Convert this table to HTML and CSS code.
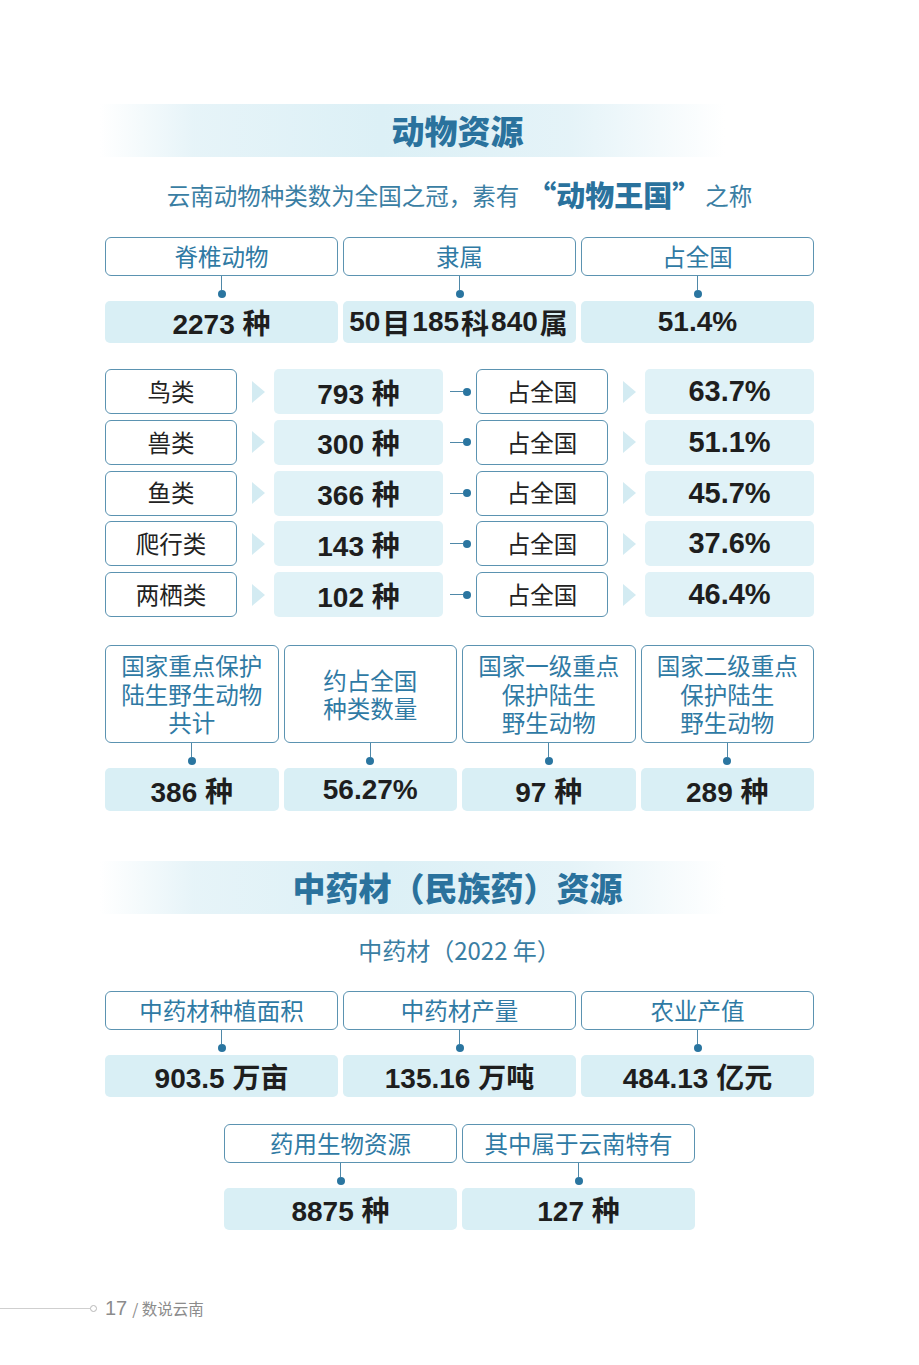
FILE: index.html
```html
<!DOCTYPE html>
<html lang="zh-CN">
<head>
<meta charset="utf-8">
<title>数说云南</title>
<link rel="stylesheet" href="styles.css">
</head>
<body>
<div class="page">
  <section class="sec sec-animal">
    <div class="band"><h2 class="band-title">动物资源</h2></div>
    <p class="sub"><span>云南动物种类数为全国之冠，素有</span><b class="sub-strong">“动物王国”</b><span>之称</span></p>

    <div class="grid3">
      <div class="stat">
        <div class="label">脊椎动物</div>
        <div class="conn"><span class="conn-line"></span><span class="conn-dot"></span></div>
        <div class="value">2273 种</div>
      </div>
      <div class="stat">
        <div class="label">隶属</div>
        <div class="conn"><span class="conn-line"></span><span class="conn-dot"></span></div>
        <div class="value">50<span class="cu">目</span>185<span class="cu">科</span>840<span class="cu">属</span></div>
      </div>
      <div class="stat">
        <div class="label">占全国</div>
        <div class="conn"><span class="conn-line"></span><span class="conn-dot"></span></div>
        <div class="value">51.4%</div>
      </div>
    </div>

    <div class="rows">
      <div class="rlabel">鸟类</div><div class="tri"></div><div class="rvalue">793 种</div><div class="hconn"><span class="hline"></span><span class="conn-dot"></span></div><div class="rlabel">占全国</div><div class="tri"></div><div class="rvalue pct">63.7%</div>
      <div class="rlabel">兽类</div><div class="tri"></div><div class="rvalue">300 种</div><div class="hconn"><span class="hline"></span><span class="conn-dot"></span></div><div class="rlabel">占全国</div><div class="tri"></div><div class="rvalue pct">51.1%</div>
      <div class="rlabel">鱼类</div><div class="tri"></div><div class="rvalue">366 种</div><div class="hconn"><span class="hline"></span><span class="conn-dot"></span></div><div class="rlabel">占全国</div><div class="tri"></div><div class="rvalue pct">45.7%</div>
      <div class="rlabel">爬行类</div><div class="tri"></div><div class="rvalue">143 种</div><div class="hconn"><span class="hline"></span><span class="conn-dot"></span></div><div class="rlabel">占全国</div><div class="tri"></div><div class="rvalue pct">37.6%</div>
      <div class="rlabel">两栖类</div><div class="tri"></div><div class="rvalue">102 种</div><div class="hconn"><span class="hline"></span><span class="conn-dot"></span></div><div class="rlabel">占全国</div><div class="tri"></div><div class="rvalue pct">46.4%</div>
    </div>

    <div class="grid4">
      <div class="stat">
        <div class="label label-tall"><span class="ln">国家重点保护</span><span class="ln">陆生野生动物</span><span class="ln">共计</span></div>
        <div class="conn"><span class="conn-line"></span><span class="conn-dot"></span></div>
        <div class="value value-b">386 种</div>
      </div>
      <div class="stat">
        <div class="label label-tall"><span class="ln">约占全国</span><span class="ln">种类数量</span></div>
        <div class="conn"><span class="conn-line"></span><span class="conn-dot"></span></div>
        <div class="value value-b">56.27%</div>
      </div>
      <div class="stat">
        <div class="label label-tall"><span class="ln">国家一级重点</span><span class="ln">保护陆生</span><span class="ln">野生动物</span></div>
        <div class="conn"><span class="conn-line"></span><span class="conn-dot"></span></div>
        <div class="value value-b">97 种</div>
      </div>
      <div class="stat">
        <div class="label label-tall"><span class="ln">国家二级重点</span><span class="ln">保护陆生</span><span class="ln">野生动物</span></div>
        <div class="conn"><span class="conn-line"></span><span class="conn-dot"></span></div>
        <div class="value value-b">289 种</div>
      </div>
    </div>
  </section>

  <section class="sec sec-herb">
    <div class="band"><h2 class="band-title">中药材（民族药）资源</h2></div>
    <p class="sub sub2">中药材（2022 年）</p>

    <div class="grid3">
      <div class="stat">
        <div class="label">中药材种植面积</div>
        <div class="conn"><span class="conn-line"></span><span class="conn-dot"></span></div>
        <div class="value">903.5 万亩</div>
      </div>
      <div class="stat">
        <div class="label">中药材产量</div>
        <div class="conn"><span class="conn-line"></span><span class="conn-dot"></span></div>
        <div class="value">135.16 万吨</div>
      </div>
      <div class="stat">
        <div class="label">农业产值</div>
        <div class="conn"><span class="conn-line"></span><span class="conn-dot"></span></div>
        <div class="value">484.13 亿元</div>
      </div>
    </div>

    <div class="grid2">
      <div class="stat">
        <div class="label">药用生物资源</div>
        <div class="conn"><span class="conn-line"></span><span class="conn-dot"></span></div>
        <div class="value">8875 种</div>
      </div>
      <div class="stat">
        <div class="label">其中属于云南特有</div>
        <div class="conn"><span class="conn-line"></span><span class="conn-dot"></span></div>
        <div class="value">127 种</div>
      </div>
    </div>
  </section>

  <footer class="foot">
    <span class="foot-line"></span><span class="foot-ring"></span>
    <span class="foot-num">17</span><span class="foot-text">/ 数说云南</span>
  </footer>
</div>
</body>
</html>
```

FILE: styles.css
```css
* { box-sizing: border-box; }
html, body { margin: 0; padding: 0; background: #ffffff; }
body {
  font-family: "Noto Sans CJK SC", "Noto Sans", sans-serif;
  color: #222;
}
.page {
  width: 919px;
  padding: 104px 105px 0 105px;
  position: relative;
}
.sec { display: flex; flex-direction: column; }

.band {
  margin: 0 -5px 0 -5px;
  width: 625px;
  height: 53px;
  background: linear-gradient(to right,
    rgba(222,240,246,0) 0%,
    rgba(222,240,246,0.75) 15%,
    #dcf0f6 45%,
    rgba(222,240,246,0.8) 75%,
    rgba(222,240,246,0) 100%);
  display: flex;
  align-items: center;
  justify-content: center;
}
.band-title {
  margin: 0 0 0 90px;
  font-size: 33px;
  font-weight: 900;
  color: #2a729d;
  line-height: 1;
  white-space: nowrap;
}
.sub {
  margin: 21px 0 23px;
  height: 36px;
  display: flex;
  align-items: center;
  justify-content: center;
  font-size: 23.5px;
  line-height: 1;
  color: #3a7ea3;
  white-space: nowrap;
}
.sub-strong {
  font-size: 29px;
  font-weight: 900;
  color: #2a729d;
  margin: 0 4px 0 8px;
  line-height: 1;
  position: relative;
  top: -2px;
}
.sub2 { margin: 18px 0 23px; font-size: 24px; }

.grid3 {
  display: grid;
  grid-template-columns: repeat(3, 1fr);
  column-gap: 5px;
}
.grid4 {
  display: grid;
  grid-template-columns: repeat(4, 1fr);
  column-gap: 5px;
  margin-top: 28px;
}
.grid2 {
  display: grid;
  grid-template-columns: 233px 233px;
  column-gap: 5px;
  justify-content: center;
  margin-top: 27px;
}
.stat { display: flex; flex-direction: column; align-items: stretch; }

.label {
  height: 39px;
  border: 1px solid #5b93b1;
  border-radius: 6px;
  display: flex;
  align-items: center;
  justify-content: center;
  text-align: center;
  font-size: 23.5px;
  color: #2f7aa4;
  line-height: 1;
  white-space: nowrap;
}
.label-tall {
  height: 98px;
  flex-direction: column;
  font-size: 23.5px;
}
.ln {
  display: block;
  height: 28.5px;
  line-height: 28.5px;
}

.conn {
  height: 25px;
  display: flex;
  flex-direction: column;
  align-items: center;
}
.conn-line {
  display: block;
  width: 1px;
  height: 14px;
  background: #4f88a8;
}
.conn-dot {
  display: block;
  width: 8px;
  height: 8px;
  border-radius: 50%;
  background: #2a75a0;
  flex: none;
}

.value {
  height: 42px;
  border-radius: 5px;
  background: #d9eff5;
  display: flex;
  align-items: center;
  justify-content: center;
  font-family: "Liberation Sans", "Noto Sans CJK SC", sans-serif;
  font-weight: 700;
  font-size: 28px;
  color: #1e1e1e;
  white-space: pre;
}
.value-b { height: 43px; }
.cu { margin: 0 2px; }

.rows {
  margin-top: 26px;
  display: grid;
  grid-template-columns: 132px 37px 169px 33px 132px 37px 169px;
  grid-auto-rows: 45px;
  row-gap: 5.75px;
}
.rlabel {
  border: 1px solid #5b93b1;
  border-radius: 6px;
  display: flex;
  align-items: center;
  justify-content: center;
  font-size: 23.5px;
  color: #222;
  line-height: 1;
}
.tri {
  display: flex;
  align-items: center;
  padding-left: 15px;
}
.tri::before {
  content: "";
  display: block;
  width: 0;
  height: 0;
  border-top: 11px solid transparent;
  border-bottom: 11px solid transparent;
  border-left: 13px solid #d3ebf2;
}
.rvalue {
  border-radius: 5px;
  background: #e0f2f7;
  display: flex;
  align-items: center;
  justify-content: center;
  font-family: "Liberation Sans", "Noto Sans CJK SC", sans-serif;
  font-weight: 700;
  font-size: 28px;
  color: #1e1e1e;
  white-space: pre;
}
.pct { font-size: 29px; }
.hconn {
  display: flex;
  align-items: center;
  padding-left: 7px;
}
.hline {
  display: block;
  width: 13px;
  height: 1px;
  background: #4f88a8;
}

.sec-herb { margin-top: 50px; }

.foot {
  margin: 66px 0 0 -105px;
  display: flex;
  align-items: center;
  height: 24px;
}
.foot-line {
  display: block;
  width: 90px;
  height: 1px;
  background: #cfcfcf;
}
.foot-ring {
  display: block;
  width: 7px;
  height: 7px;
  border: 1px solid #b8b8b8;
  border-radius: 50%;
  margin-right: 8px;
}
.foot-num {
  font-family: "Liberation Sans", sans-serif;
  font-size: 20px;
  color: #8c8c8c;
  margin-right: 5px;
}
.foot-text {
  font-size: 15.5px;
  color: #8c8c8c;
}
```
